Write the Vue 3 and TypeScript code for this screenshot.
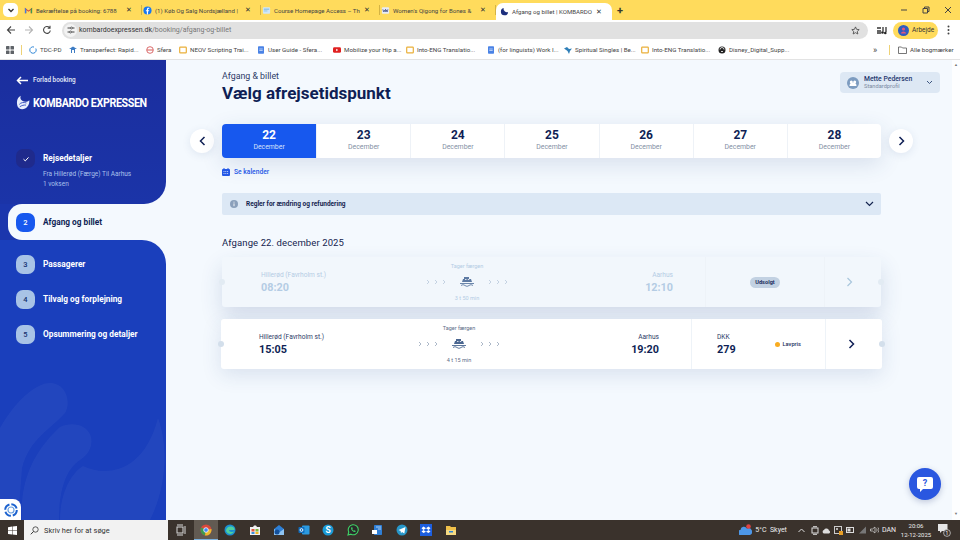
<script setup lang="ts">
const tabs = [
  { t: 'Bekræftelse på booking: 6788', w: 119, k: 'gm' },
  { t: '(1) Køb Og Salg Nordsjælland |', w: 119, k: 'fb' },
  { t: 'Course Homepage Access – Th', w: 119, k: 'co' },
  { t: "Women's Qigong for Bones &", w: 116, k: 'ww' },
]
const marks = [
  { t: 'TDC-PD', k: 'tdc', w: 40 },
  { t: 'Transperfect: Rapid...', k: 'tp', w: 77 },
  { t: 'Sfera', k: 'sf', w: 33 },
  { t: 'NEOV Scripting Trai...', k: 'y', w: 78 },
  { t: 'User Guide - Sfera...', k: 'b', w: 76 },
  { t: 'Mobilize your Hip a...', k: 'yt', w: 73 },
  { t: 'Into-ENG Translatio...', k: 'y', w: 81 },
  { t: '(for linguists) Work I...', k: 'b', w: 77 },
  { t: 'Spiritual Singles | Be...', k: 'sp', w: 77 },
  { t: 'Into-ENG Translatio...', k: 'y', w: 77 },
  { t: 'Disney_Digital_Supp...', k: 'di', w: 72 },
]
const steps = [
  { n: 3, t: 'Passagerer' },
  { n: 4, t: 'Tilvalg og forplejning' },
  { n: 5, t: 'Opsummering og detaljer' },
]
const days = [22, 23, 24, 25, 26, 27, 28]
</script>

<template>
  <div class="screen">
    <div class="tabbar">
      <div class="tabsearch"><svg width="8" height="8" viewBox="0 0 8 8"><path d="M1.5 3 4 5.5 6.5 3" fill="none" stroke="#333" stroke-width="1.3"/></svg></div>
      <div v-for="tab in tabs" :key="tab.k" class="tab" :style="{ width: tab.w + 'px' }">
        <svg v-if="tab.k === 'gm'" class="fav" viewBox="0 0 10 10"><path d="M1 8V2l4 3 4-3v6H7.500V4.500L5 6.400 2.500 4.500V8Z" fill="#d9483b"/><path d="M7.500 8V3.200L9 2v6Z" fill="#3d9a4f"/><path d="M1 8V2l1.500 1.200V8Z" fill="#3f7fe0"/></svg>
        <svg v-else-if="tab.k === 'fb'" class="fav" viewBox="0 0 10 10"><circle cx="5" cy="5" r="4.500" fill="#1877f2"/><path d="M5.600 9.400V5.900h1.100l.2-1.300H5.600v-.8c0-.4.2-.7.7-.7H7V2a6 6 0 0 0-1-.1c-1 0-1.700.6-1.700 1.700v1H3.200v1.300h1.100v3.500Z" fill="#fff"/></svg>
        <svg v-else-if="tab.k === 'co'" class="fav" viewBox="0 0 10 10"><rect x="1" y="1.500" width="8" height="7" rx="1" fill="#cfe6f7"/><rect x="2" y="3" width="6" height="1" fill="#6fb1de"/><rect x="2" y="5" width="4" height="1" fill="#8cc2e6"/></svg>
        <svg v-else class="fav" viewBox="0 0 10 10"><rect x="1" y="1.500" width="8" height="7" rx="1" fill="#e8ecf5"/><path d="m2 3.500.8 3 .8-2 .8 2 .8-3M5 3.500l.6 3 .7-2 .7 2 .7-3" fill="none" stroke="#24306e" stroke-width=".6"/></svg>
        <span class="tabtxt">{{ tab.t }}</span>
        <span class="tabx">✕</span>
      </div>
      <div class="tab active">
        <svg class="fav" viewBox="0 0 10 10"><path d="M1 5a4 4 0 0 1 3-4 4 4 0 0 0 1.500 4A3.500 3.500 0 0 0 9 5.500 4 4 0 0 1 1 5Z" fill="#1d2f7e"/></svg>
        <span class="tabtxt">Afgang og billet | KOMBARDO</span>
        <span class="tabx">✕</span>
      </div>
      <span class="plus">+</span>
      <div class="winctl">
        <svg width="8" height="8" viewBox="0 0 8 8"><path d="M1 4h6" stroke="#444" fill="none"/></svg>
        <svg width="8" height="8" viewBox="0 0 8 8"><path d="M1 2.500h4.500V7H1ZM2.500 2.500V1H7v4.500H5.500" stroke="#444" fill="none"/></svg>
        <svg width="8" height="8" viewBox="0 0 8 8"><path d="m1 1 6 6M7 1 1 7" stroke="#444" fill="none"/></svg>
      </div>
    </div>

    <div class="toolbar">
      <svg class="tool" viewBox="0 0 10 10"><path d="M9 5H1.500M5 1.500 1.500 5 5 8.500" fill="none" stroke="#444" stroke-width="1.100"/></svg>
      <svg class="tool" viewBox="0 0 10 10"><path d="M1 5h7.500M5 1.500 8.500 5 5 8.500" fill="none" stroke="#b5b5b5" stroke-width="1.100"/></svg>
      <svg class="tool" viewBox="0 0 10 10"><path d="M8.300 5.500A3.400 3.400 0 1 1 7.500 2.700M8 .8v2.400H5.700" fill="none" stroke="#444" stroke-width="1.100"/></svg>
      <div class="address">
        <span class="siteinfo"><svg width="8" height="8" viewBox="0 0 8 8"><path d="M.5 2h3M5.500 2h2M.5 6h2M4.500 6h3" stroke="#444"/><circle cx="4.500" cy="2" r="1" fill="none" stroke="#444" stroke-width=".8"/><circle cx="3.500" cy="6" r="1" fill="none" stroke="#444" stroke-width=".8"/></svg></span>
        <span class="url"><b>kombardoexpressen.dk</b>/booking/afgang-og-billet</span>
        <svg class="star" width="9" height="9" viewBox="0 0 10 10"><path d="m5 1 1.200 2.700 2.900.3L7 6l.6 2.900L5 7.400 2.400 8.900 3 6 .9 4l2.900-.3Z" fill="none" stroke="#444" stroke-width=".9"/></svg>
      </div>
      <svg class="ext" width="10" height="9" viewBox="0 0 10 9"><path d="M0 1h4v2H0ZM0 4h4v4H0Z" fill="#666"/><path d="M6 1v4.500M9 1v5" stroke="#222" stroke-width="1.200"/><circle cx="5.500" cy="6.500" r="1.300" fill="#222"/><circle cx="8.300" cy="7" r="1.300" fill="#222"/></svg>
      <div class="work">
        <svg width="11" height="11" viewBox="0 0 11 11"><circle cx="5.500" cy="5.500" r="5.500" fill="#2f5cc0"/><circle cx="5.500" cy="4" r="1.600" fill="#e0567a"/><path d="M2.700 8.500a3 3 0 0 1 5.600 0Z" fill="#e0567a"/></svg>
        <span>Arbejde</span>
      </div>
      <svg class="dots" width="3" height="10" viewBox="0 0 3 10"><circle cx="1.500" cy="1.500" r="1" fill="#444"/><circle cx="1.500" cy="5" r="1" fill="#444"/><circle cx="1.500" cy="8.500" r="1" fill="#444"/></svg>
    </div>

    <div class="bookmarks">
      <svg class="apps" width="8" height="8" viewBox="0 0 8 8"><g fill="#5f6368"><rect width="3.500" height="3.500" rx=".6"/><rect x="4.500" width="3.500" height="3.500" rx=".6"/><rect y="4.500" width="3.500" height="3.500" rx=".6"/><rect x="4.500" y="4.500" width="3.500" height="3.500" rx=".6"/></g></svg>
      <i class="bsep"></i>
      <div v-for="(m, i) in marks" :key="i" class="mark" :style="{ width: m.w + 'px' }">
        <svg class="mico" viewBox="0 0 8 8">
          <path v-if="m.k === 'tdc'" d="M6.800 2.500A3.200 3.200 0 1 1 5 1" fill="none" stroke="#2f86d6" stroke-width="1"/>
          <path v-else-if="m.k === 'tp'" d="M0 3 4 .5 8 3 6 3v4H5V4H3v3H2V3Z" fill="#3d7cc4"/>
          <g v-else-if="m.k === 'sf'"><circle cx="4" cy="4" r="3.300" fill="none" stroke="#d65a5a" stroke-width=".9"/><path d="M1 4h6" stroke="#d65a5a"/></g>
          <rect v-else-if="m.k === 'y'" x=".7" y="1.200" width="6.600" height="5.600" rx=".6" fill="none" stroke="#eab03a" stroke-width="1.200"/>
          <g v-else-if="m.k === 'b'"><rect x="1" y=".3" width="6" height="7.400" rx=".7" fill="#4a83e6"/><path d="M2.300 3h3.400M2.300 4.500h3.400" stroke="#fff" stroke-width=".6"/></g>
          <g v-else-if="m.k === 'yt'"><rect y="1.200" width="8" height="5.600" rx="1.400" fill="#e02020"/><path d="m3.200 2.700 2 1.300-2 1.300Z" fill="#fff"/></g>
          <path v-else-if="m.k === 'sp'" d="M0 2.500 3 1l2 2 3-.5L6 5 5 8 3.500 5Z" fill="#2f7fb8"/>
          <g v-else><circle cx="4" cy="4" r="3.500" fill="#222"/><path d="M2 3.500a2 2 0 0 1 4 0M3 5.500h2" stroke="#fff" stroke-width=".8" fill="none"/></g>
        </svg>
        <span>{{ m.t }}</span>
      </div>
      <span class="more">»</span>
      <i class="bsep sep2"></i>
      <div class="allmarks">
        <svg width="9" height="8" viewBox="0 0 9 8"><path d="M.5 1h3l1 1h4v5.500h-8Z" fill="none" stroke="#555" stroke-width=".8"/></svg>
        <span>Alle bogmærker</span>
      </div>
    </div>

    <div class="page">
      <aside class="side">
        <svg class="swirl" width="166" height="140" viewBox="0 0 166 140">
          <g fill="#ffffff" fill-opacity=".04">
            <path d="M0 48C15 22 35 3 50 3c15 0 22 18 15 30C50 50 30 58 22 88L18 140H0Z"/>
            <path d="M22 140C20 105 30 75 60 47c10-5 27-4 31 10 2 10-3 18-11 23-14 9-21 30-21 60Z"/>
            <path d="M60 140c0-25 10-46 23-54 20 10 60 10 75-48 11 30 8 70-8 102Z"/>
          </g>
        </svg>
        <div class="side-top">
          <div class="back">
            <svg width="13" height="9" viewBox="0 0 13 9"><path d="M12 4.500H2M5 1 1.500 4.500 5 8" fill="none" stroke="#fff" stroke-width="1.500"/></svg>
            <span>Forlad booking</span>
          </div>
          <div class="logo">
            <svg width="15" height="15" viewBox="0 0 15 15"><path d="M1 7C1 4 3 1.500 5 .5 4 3 5 5 7 6c2 1 5 1 7-1 .5 5-3 9.500-7.500 9.500S1 11 1 7Z" fill="#e8eefb"/><path d="M3.500 9.500C5 7.500 8 7 11 8M4 12c2-1.500 4.500-2 6.500-1.800" fill="none" stroke="#2440b8" stroke-width=".9"/></svg>
            <span class="logotext">KOMBARDO EXPRESSEN</span>
          </div>
          <div class="step1">
            <span class="num done"><svg width="8" height="8" viewBox="0 0 8 8"><path d="m1.500 4.200 1.800 1.700 3.200-3.500" fill="none" stroke="#fff" stroke-width="1"/></svg></span>
            <div>
              <div class="stepname">Rejsedetaljer</div>
              <div class="stepsub">Fra Hillerød (Færge) Til Aarhus</div>
              <div class="stepsub">1 voksen</div>
            </div>
          </div>
        </div>
        <div class="step-active">
          <span class="num cur">2</span>
          <span class="stepname dark">Afgang og billet</span>
        </div>
        <div class="side-bottom">
          <div v-for="s in steps" :key="s.n" class="step">
            <span class="num todo">{{ s.n }}</span>
            <span class="stepname">{{ s.t }}</span>
          </div>
        </div>
        <div class="widget">
          <svg width="16" height="16" viewBox="0 0 16 16"><circle cx="8" cy="8" r="5.800" fill="none" stroke="#1c62cf" stroke-width="2" stroke-dasharray="7 2"/><circle cx="8" cy="8" r="3" fill="none" stroke="#6aa0e0" stroke-width="1.200"/></svg>
        </div>
      </aside>

      <main class="main">
        <div class="content">
          <header class="head">
            <div>
              <div class="crumb">Afgang &amp; billet</div>
              <h1>Vælg afrejsetidspunkt</h1>
            </div>
            <div class="chip">
              <span class="avatar"><svg width="8" height="6" viewBox="0 0 8 6"><circle cx="2.300" cy="2" r="1.500" fill="#fff"/><circle cx="5.700" cy="2" r="1.500" fill="#fff"/><path d="M.5 6a2 2 0 0 1 7 0Z" fill="#fff"/></svg></span>
              <div class="chipname">
                <div>Mette Pedersen</div>
                <small>Standardprofil</small>
              </div>
              <svg width="7" height="5" viewBox="0 0 7 5"><path d="m1 1 2.500 2.500L6 1" fill="none" stroke="#3d5680" stroke-width="1"/></svg>
            </div>
          </header>

          <div class="daterow">
            <button class="round"><svg width="7" height="10" viewBox="0 0 7 10"><path d="M5.500 1 1.500 5l4 4" fill="none" stroke="#0f1f55" stroke-width="1.500"/></svg></button>
            <div class="days">
              <div v-for="(d, i) in days" :key="d" class="day" :class="{ on: i === 0 }">
                <strong>{{ d }}</strong>
                <span>December</span>
              </div>
            </div>
            <button class="round"><svg width="7" height="10" viewBox="0 0 7 10"><path d="m1.500 1 4 4-4 4" fill="none" stroke="#0f1f55" stroke-width="1.500"/></svg></button>
          </div>

          <div class="body">
            <div class="cal">
              <svg width="8" height="8" viewBox="0 0 8 8"><rect y="1" width="8" height="7" rx="1" fill="#2458e6"/><path d="M2 0v2M6 0v2" stroke="#2458e6"/><path d="M1.500 3.500h5M1.500 5.500h5" stroke="#fff" stroke-width=".7" stroke-dasharray="1 .8"/></svg>
              <span>Se kalender</span>
            </div>
            <div class="rules">
              <svg width="8" height="8" viewBox="0 0 8 8"><circle cx="4" cy="4" r="4" fill="#8ba0bb"/><path d="M4 3.400v2.800M4 1.700v.9" stroke="#fff" stroke-width=".9"/></svg>
              <span>Regler for ændring og refundering</span>
              <svg class="rch" width="9" height="6" viewBox="0 0 9 6"><path d="m1 1 3.500 3.500L8 1" fill="none" stroke="#152550" stroke-width="1.200"/></svg>
            </div>
            <h2>Afgange 22. december 2025</h2>

            <article class="card soldout">
              <div class="route">
                <div class="ep">
                  <span>Hillerød (Favrholm st.)</span>
                  <b>08:20</b>
                </div>
                <div class="mid">
                  <span>Tager færgen</span>
                  <div class="ferry">
                    <svg width="20" height="6" viewBox="0 0 20 6"><path d="m1 1 2 2-2 2M9 1l2 2-2 2M17 1l2 2-2 2" fill="none" stroke="#b7c8da" stroke-width=".8"/></svg>
                    <svg width="16" height="12" viewBox="0 0 16 12"><path d="M5 1h5v2h2l1 3H3l1-3h1Z" fill="#5d7aa3"/><path d="M6 3.500h1.500M8.800 3.500h1.500" stroke="#fff" stroke-width=".8"/><path d="M1 7.500h14M2 9.500c1.500-1 2.500-1 4 0s2.500 1 4 0 2.500-1 4 0" fill="none" stroke="#5d7aa3" stroke-width=".9"/></svg>
                    <svg width="20" height="6" viewBox="0 0 20 6"><path d="m1 1 2 2-2 2M9 1l2 2-2 2M17 1l2 2-2 2" fill="none" stroke="#b7c8da" stroke-width=".8"/></svg>
                  </div>
                  <span>3 t 50 min</span>
                </div>
                <div class="ep right">
                  <span>Aarhus</span>
                  <b>12:10</b>
                </div>
              </div>
              <div class="price center"><span class="sold">Udsolgt</span></div>
              <div class="go"><svg width="7" height="10" viewBox="0 0 7 10"><path d="m1.500 1 4 4-4 4" fill="none" stroke="#a9c6dc" stroke-width="1.200"/></svg></div>
              <i class="notch l"></i><i class="notch r"></i>
            </article>

            <article class="card open">
              <div class="route">
                <div class="ep">
                  <span>Hillerød (Favrholm st.)</span>
                  <b>15:05</b>
                </div>
                <div class="mid">
                  <span>Tager færgen</span>
                  <div class="ferry">
                    <svg width="20" height="6" viewBox="0 0 20 6"><path d="m1 1 2 2-2 2M9 1l2 2-2 2M17 1l2 2-2 2" fill="none" stroke="#97a6ba" stroke-width=".8"/></svg>
                    <svg width="16" height="12" viewBox="0 0 16 12"><path d="M5 1h5v2h2l1 3H3l1-3h1Z" fill="#4a6690"/><path d="M6 3.500h1.500M8.800 3.500h1.500" stroke="#fff" stroke-width=".8"/><path d="M1 7.500h14M2 9.500c1.500-1 2.500-1 4 0s2.500 1 4 0 2.500-1 4 0" fill="none" stroke="#4a6690" stroke-width=".9"/></svg>
                    <svg width="20" height="6" viewBox="0 0 20 6"><path d="m1 1 2 2-2 2M9 1l2 2-2 2M17 1l2 2-2 2" fill="none" stroke="#97a6ba" stroke-width=".8"/></svg>
                  </div>
                  <span>4 t 15 min</span>
                </div>
                <div class="ep right">
                  <span>Aarhus</span>
                  <b>19:20</b>
                </div>
              </div>
              <div class="price">
                <div class="ep">
                  <span>DKK</span>
                  <b>279</b>
                </div>
                <div class="low"><i></i>Lavpris</div>
              </div>
              <div class="go"><svg width="7" height="10" viewBox="0 0 7 10"><path d="m1.500 1 4 4-4 4" fill="none" stroke="#0f1f55" stroke-width="1.500"/></svg></div>
              <i class="notch l"></i><i class="notch r"></i>
            </article>
          </div>
        </div>
        <div class="scroll"><span>▲</span><span>▼</span></div>
        <button class="fab">
          <svg width="16" height="15" viewBox="0 0 16 15"><path d="M2 0h12a2 2 0 0 1 2 2v8a2 2 0 0 1-2 2H6l-3 3v-3H2a2 2 0 0 1-2-2V2a2 2 0 0 1 2-2Z" fill="#fff"/><text x="8" y="9" font-size="9" font-weight="700" text-anchor="middle" fill="#2a57e0" font-family="Roboto, sans-serif">?</text></svg>
        </button>
      </main>
    </div>

    <footer class="taskbar">
      <div class="start"><svg width="9" height="9" viewBox="0 0 9 9"><path d="M0 1.200 4 .6v3.600H0ZM4.500.5 9 0v4.200H4.500ZM0 4.800h4v3.700l-4-.6ZM4.500 4.800H9V9l-4.500-.6Z" fill="#fff"/></svg></div>
      <div class="search">
        <svg width="9" height="9" viewBox="0 0 9 9"><circle cx="5.500" cy="3.500" r="2.700" fill="none" stroke="#333" stroke-width=".8"/><path d="M3.500 5.500 .8 8.300" stroke="#333"/></svg>
        <span>Skriv her for at søge</span>
      </div>
      <div class="apps-row">
        <span class="ti"><svg viewBox="0 0 12 12"><rect x="2" y="3" width="6" height="6" fill="none" stroke="#d8d8d8"/><path d="M10 2v8M2 1h6M2 11h6" stroke="#d8d8d8"/></svg></span>
        <span class="ti cur-app"><svg viewBox="0 0 12 12"><circle cx="6" cy="6" r="5.500" fill="#d9483b"/><path d="M6 6 1.200 3.500A5.500 5.500 0 0 0 5 11.400Z" fill="#3d9a4f"/><path d="M6 6l5.400-1A5.500 5.500 0 0 1 5 11.400Z" fill="#e9bb2f"/><circle cx="6" cy="6" r="2.300" fill="#4285f4" stroke="#fff" stroke-width=".8"/></svg></span>
        <span class="ti"><svg viewBox="0 0 12 12"><circle cx="6" cy="6" r="5.500" fill="#1b8fd2"/><path d="M2 7c0-3 2-4.500 4.500-4.500S11 4 10.500 6H5c0 2 3 2.500 5 1.500-1 2.500-5 3.500-7 1Z" fill="#4fd0a0"/></svg></span>
        <span class="ti"><svg viewBox="0 0 12 12"><path d="M1 3h3l1-1.500h2L8 3h3v8H1Z" fill="#f1f1f1"/><rect x="2.500" y="5" width="3" height="2.500" fill="#e2553c"/><rect x="6.500" y="5" width="3" height="2.500" fill="#7fb83e"/><rect x="2.500" y="8" width="3" height="2" fill="#3a8fdc"/><rect x="6.500" y="8" width="3" height="2" fill="#f2b824"/></svg></span>
        <span class="ti"><svg viewBox="0 0 12 12"><path d="M6 1 11 5v6H1V5Z" fill="#2d7fd6"/><path d="M1 5l5 3.500L11 5v6H1Z" fill="#8ec3f2"/><circle cx="4" cy="8" r="2.500" fill="#13509c"/></svg></span>
        <span class="ti"><svg viewBox="0 0 12 12"><rect x="4" y="1.500" width="7.500" height="9" rx=".8" fill="#2b9ae0"/><rect x=".5" y="3" width="6" height="6" rx=".8" fill="#0f6cbd"/><circle cx="3.500" cy="6" r="1.400" fill="none" stroke="#fff" stroke-width=".9"/></svg></span>
        <span class="ti"><svg viewBox="0 0 12 12"><circle cx="6" cy="6" r="5.500" fill="#1a9bd7"/><text x="6" y="9" font-size="8.500" font-weight="700" text-anchor="middle" fill="#fff" font-family="Roboto, sans-serif">S</text></svg></span>
        <span class="ti"><svg viewBox="0 0 12 12"><path d="M1 11 1.800 8A5 5 0 1 1 4 10.200Z" fill="#2a2a2a" stroke="#3fd467" stroke-width="1.100"/><path d="M4 3.800c0 2.500 1.800 4.200 4.200 4.300l.6-1.200-1.400-.7-.6.600C6 6.400 5.500 5.800 5.200 5l.6-.6-.7-1.400Z" fill="#3fd467"/></svg></span>
        <span class="ti"><svg viewBox="0 0 12 12"><rect x="3" y="1" width="8" height="10" rx=".8" fill="#2f7fd6"/><rect x="1" y="6" width="5" height="4" fill="#fff"/><path d="M5 3h5M7 5h3" stroke="#cfe3f8" stroke-width=".8"/></svg></span>
        <span class="ti"><svg viewBox="0 0 12 12"><circle cx="6" cy="6" r="5.500" fill="#2797c9"/><path d="m2.500 6 7-3-1.200 6.500L6 8 5 9.200 4.600 7Z" fill="#fff"/></svg></span>
        <span class="ti"><svg viewBox="0 0 12 12"><rect width="12" height="12" fill="#1d5fe0"/><path d="M3.500 2.500 6 4.200 3.500 6 1.500 4.300ZM8.500 2.500 10.500 4.300 8.500 6 6 4.200ZM3.500 6 6 7.700 3.500 9 1.500 7.500ZM8.500 6 10.500 7.500 8.500 9 6 7.700Z" fill="#fff"/></svg></span>
        <span class="ti"><svg viewBox="0 0 12 12"><path d="M1 2h4l1 1h5v8H1Z" fill="#efc04a"/><rect x="1" y="6" width="10" height="5" fill="#f6da82"/><rect x="4" y="7" width="4" height="1.500" fill="#2f86d6"/></svg></span>
      </div>
      <div class="tray">
        <span class="weather">
          <svg width="13" height="12" viewBox="0 0 13 12"><path d="M1 11a2.500 2.500 0 0 1 .5-5A3.500 3.500 0 0 1 8 4.500 3.200 3.200 0 0 1 11 11Z" fill="#4d97e8"/><circle cx="9.500" cy="2.500" r="2.300" fill="#e04343"/></svg>
          <span>5°C&nbsp; Skyet</span>
        </span>
        <svg class="tr up" width="7" height="5" viewBox="0 0 7 5"><path d="m.5 4 3-3 3 3" fill="none" stroke="#ddd"/></svg>
        <svg class="tr" width="8" height="9" viewBox="0 0 8 9"><rect x="1" y="2" width="6" height="5" fill="none" stroke="#ddd"/><path d="M2 .7h4M2 8.300h4" stroke="#ddd"/></svg>
        <svg class="tr" width="9" height="7" viewBox="0 0 9 7"><path d="M2 6.500a1.800 1.800 0 0 1 0-3.500 2.700 2.700 0 0 1 5 .5 1.600 1.600 0 0 1 0 3Z" fill="#ddd"/></svg>
        <svg class="tr" width="9" height="9" viewBox="0 0 9 9"><rect x=".5" y=".5" width="7" height="7" fill="none" stroke="#ccc"/><circle cx="3" cy="3" r="1" fill="#ddd"/><rect x="5" y="5" width="4" height="4" fill="#e89f26"/></svg>
        <svg class="tr" width="9" height="6" viewBox="0 0 9 6"><rect x=".5" y=".5" width="7" height="5" fill="none" stroke="#ddd"/><rect x="1.500" y="1.500" width="3" height="3" fill="#ddd"/></svg>
        <svg class="tr" width="9" height="8" viewBox="0 0 9 8"><path d="M1 7.500 8 .5v7Z" fill="#777"/></svg>
        <svg class="tr" width="9" height="8" viewBox="0 0 9 8"><path d="M.5 3h2L5 1v6L2.500 5h-2ZM6.500 2.500a2.200 2.200 0 0 1 0 3M8 1.500a3.800 3.800 0 0 1 0 5" fill="none" stroke="#ddd" stroke-width=".7"/></svg>
        <span class="lang">DAN</span>
        <div class="clock"><div>20:06</div><div>12-12-2025</div></div>
        <svg class="note" width="13" height="13" viewBox="0 0 13 13"><path d="M0 0h9.500v7H4L2 9V7H0Z" fill="#e6e6e6"/><circle cx="9" cy="9" r="3.400" fill="#3a322c" stroke="#ddd" stroke-width=".7"/><text x="9" y="11" font-size="5" text-anchor="middle" fill="#fff" font-family="Roboto, sans-serif">1</text></svg>
      </div>
    </footer>
  </div>
</template>

<style>
html, body { margin: 0; background: #f4f9fe; }
</style>

<style scoped>
* { box-sizing: border-box; }
.screen { width: 960px; height: 540px; display: flex; flex-direction: column; overflow: hidden; font-family: Roboto, "Liberation Sans", sans-serif; color: #0f1f55; background: #f4f9fe; }

.tabbar { height: 20px; background: #ffdb5c; display: flex; align-items: center; padding-left: 3px; position: relative; color: #444; }
.tabsearch { width: 15px; height: 14px; background: #fff; border-radius: 5px; display: flex; align-items: center; justify-content: center; margin-right: 5px; }
.tab { height: 20px; display: flex; align-items: center; padding: 0 5px 0 1px; font-size: 6.100px; position: relative; flex: none; }
.tab:not(.active)::after { content: ""; position: absolute; right: 0; top: 5px; height: 10px; width: 1px; background: #d4b344; }
.fav { width: 9px; height: 9px; flex: none; margin-right: 3px; }
.tabtxt { flex: 1; white-space: nowrap; min-width: 0; }
.tabx { font-size: 6.500px; margin: 0 5px 0 3px; color: #333; flex: none; }
.tab.active { width: 116px; padding-left: 4px; background: #fff; border-radius: 7px 7px 0 0; height: 17px; align-self: flex-end; }
.plus { margin-left: 5px; font-size: 11px; font-weight: 700; color: #3a3a2a; line-height: 1; }
.winctl { margin-left: auto; display: flex; gap: 14px; padding-right: 8px; }

.toolbar { height: 20px; background: #fff; display: flex; align-items: center; padding-left: 6px; }
.tool { width: 10px; height: 10px; margin-right: 8px; flex: none; }
.address { width: 806px; height: 17px; margin-left: 2px; background: #e1e1e1; border-radius: 9px; display: flex; align-items: center; padding: 0 6px 0 2px; font-size: 7px; color: #777; }
.siteinfo { width: 13px; height: 13px; border-radius: 50%; background: #f3f3f3; display: flex; align-items: center; justify-content: center; margin-right: 2px; }
.url b { font-weight: 400; color: #333; }
.star { margin-left: auto; margin-right: 2px; }
.ext { margin-left: 9px; }
.work { width: 45px; height: 17px; margin-left: 6px; background: #ffdb5c; border-radius: 9px; display: flex; align-items: center; gap: 3px; padding-left: 5px; font-size: 6.500px; color: #333; }
.dots { margin-left: 9px; }

.bookmarks { height: 20px; background: #fff; display: flex; align-items: center; padding-left: 6px; font-size: 6.200px; color: #444; border-bottom: 1px solid #e3e3e3; }
.apps { flex: none; }
.bsep { width: 1px; height: 10px; background: #eed276; margin: 0 7px; flex: none; }
.mark { display: flex; align-items: center; gap: 3px; white-space: nowrap; flex: none; }
.mico { width: 8px; height: 8px; flex: none; }
.more { font-size: 9px; width: 9px; flex: none; margin-left: 83px; }
.sep2 { margin: 0 8px 0 7px; }
.allmarks { display: flex; align-items: center; gap: 3px; white-space: nowrap; }

.page { flex: 1; display: flex; min-height: 0; }
.side { width: 166px; flex: none; position: relative; display: flex; flex-direction: column; background: #f4f9fe; color: #fff; overflow: hidden; }
.swirl { position: absolute; left: 0; top: 320px; z-index: 1; }
.side-top { height: 144px; background: linear-gradient(#1b2e9e, #1b34a8); border-radius: 0 0 22px 0; padding: 15px 0 0 16px; position: relative; }
.side-bottom { flex: 1; background: #1a3fbc; border-radius: 0 24px 0 0; padding-top: 15px; padding-left: 16px; display: flex; flex-direction: column; gap: 16px; }
.side-bottom > * { position: relative; z-index: 2; }
.back { display: flex; align-items: center; gap: 4px; font-size: 6.400px; font-weight: 500; color: #e6ecfb; height: 10px; }
.logo { display: flex; align-items: center; gap: 3px; margin-top: 10px; font-size: 12.500px; font-weight: 700; letter-spacing: -.45px; height: 15px; white-space: nowrap; }
.logotext { transform: scaleX(.857); transform-origin: left center; }
.step1 { display: flex; gap: 8px; margin-top: 39px; }
.num { width: 19px; height: 19px; border-radius: 7px; display: flex; align-items: center; justify-content: center; font-size: 7.500px; font-weight: 500; flex: none; }
.done { background: #1f2a8c; }
.cur { background: #1758ee; color: #fff; }
.todo { background: #a8c3e6; color: #14306e; }
.stepname { font-size: 8.300px; font-weight: 700; color: #fff; line-height: 19px; white-space: nowrap; }
.stepname.dark { color: #0f1f55; }
.stepsub { font-size: 6.500px; color: #a9c0ec; line-height: 10px; white-space: nowrap; position: relative; top: 1px; }
.step-active { height: 36px; background: #1b36ad; display: flex; align-items: center; gap: 8px; padding-left: 16px; position: relative; isolation: isolate; }
.step-active::before { content: ""; position: absolute; z-index: -1; left: 8px; right: 0; top: 0; bottom: 0; background: #f4f9fe; border-radius: 14px 0 0 14px; }
.step { display: flex; align-items: center; gap: 8px; }
.widget { position: absolute; left: 0; bottom: 0; width: 21px; height: 21px; background: #fff; border-radius: 0 8px 0 0; display: flex; align-items: center; justify-content: center; z-index: 3; }

.main { flex: 1; display: flex; position: relative; min-width: 0; }
.content { flex: 1; padding: 10px 12px 0 24px; min-width: 0; }
.head { display: flex; justify-content: space-between; align-items: flex-start; padding-left: 32px; height: 54px; }
.crumb { font-size: 8.800px; color: #2c3a66; line-height: 12px; }
h1 { margin: 0; font-size: 17px; font-weight: 700; line-height: 22px; color: #0f1f55; }
.chip { width: 100px; height: 21px; margin-top: 2px; background: #dde8f4; border-radius: 4px; display: flex; align-items: center; padding: 0 7px; }
.avatar { width: 12px; height: 12px; border-radius: 50%; background: #7d9cc0; display: flex; align-items: center; justify-content: center; flex: none; }
.chipname { margin-left: 5px; flex: 1; font-size: 6.800px; font-weight: 500; line-height: 8px; color: #24366e; white-space: nowrap; }
.chipname small { display: block; font-size: 5.700px; line-height: 7px; color: #7b8aa2; font-weight: 400; }

.daterow { display: flex; align-items: center; gap: 8px; width: 723px; }
.round { width: 24px; height: 24px; border-radius: 50%; border: 0; background: #fff; display: flex; align-items: center; justify-content: center; padding: 0; box-shadow: 0 2px 8px rgba(40, 70, 130, .1); flex: none; }
.days { width: 659px; height: 34px; flex: none; display: grid; grid-template-columns: repeat(7, 1fr); background: #fff; border-radius: 4px; overflow: hidden; box-shadow: 0 6px 22px rgba(40, 70, 130, .14); }
.day { display: flex; flex-direction: column; align-items: center; padding-top: 4px; border-left: 1px solid #eef2f7; }
.day strong { font-size: 12px; line-height: 14px; font-weight: 700; color: #0f1f55; }
.day span { font-size: 6.900px; line-height: 9px; color: #8490a5; margin-top: 1px; }
.day.on { background: #1758ee; border-left: 0; }
.day.on strong { color: #fff; }
.day.on span { color: #d5e0fb; }

.body { padding-left: 32px; position: relative; }
.cal { display: flex; align-items: center; gap: 4px; margin-top: 9px; height: 10px; font-size: 6.700px; font-weight: 500; color: #2458e6; }
.rules { width: 659px; height: 22px; margin-top: 16px; background: #dce8f5; border-radius: 2px; display: flex; align-items: center; padding: 0 4px 0 8px; gap: 8px; font-size: 6.500px; font-weight: 700; color: #14244f; }
.rch { margin-left: auto; margin-right: 3px; }
h2 { margin: 21px 0 0; font-size: 9.500px; font-weight: 400; line-height: 13px; color: #14244f; letter-spacing: .1px; }

.card { height: 50px; display: grid; position: relative; border-radius: 3px; }
.soldout { width: 659px; margin-top: 8px; grid-template-columns: 484px 119px 1fr; background: #f2f7fc; box-shadow: 0 10px 22px rgba(40, 70, 130, .16); }
.open { width: 661px; margin: 12px 0 0 -1px; grid-template-columns: 471px 134px 1fr; background: #fff; box-shadow: 0 6px 20px rgba(40, 70, 130, .13); }
.route { display: grid; grid-template-columns: 1fr auto 1fr; align-items: center; padding: 0 32px 0 38px; border-right: 1px solid #eef3f8; }
.soldout .route { padding-left: 39px; }
.ep { display: flex; flex-direction: column; gap: 1px; padding-top: 1px; }
.ep span { font-size: 6.600px; line-height: 9px; white-space: nowrap; color: #2c3a66; }
.ep b { font-size: 10.800px; line-height: 14px; font-weight: 700; color: #0f1f55; }
.ep.right { align-items: flex-end; }
.mid { display: flex; flex-direction: column; align-items: center; font-size: 5.500px; color: #5e6d88; line-height: 8px; }
.ferry { display: flex; align-items: center; gap: 13px; height: 18px; margin: 3px 0; }
.soldout .ep span, .soldout .ep b, .soldout .mid { color: #b4cce4; }
.price { display: flex; align-items: center; justify-content: space-between; padding: 0 24px 0 25px; border-right: 1px solid #eef3f8; }
.price.center { justify-content: center; padding: 0; }
.sold { background: #c2d1e2; border-radius: 7px; padding: 1px 5px; font-size: 5.600px; line-height: 9px; font-weight: 700; color: #1e2f5e; }
.low { display: flex; align-items: center; gap: 2px; font-size: 5.700px; font-weight: 500; color: #1e2f5e; }
.low i { width: 5px; height: 5px; border-radius: 50%; background: #f9ac20; }
.go { display: flex; align-items: center; justify-content: center; padding-right: 6px; }
.soldout .go { padding-right: 8px; }
.notch { position: absolute; top: 22px; width: 6px; height: 6px; border-radius: 50%; background: #d3dfeb; }
.notch.l { left: -3px; }
.notch.r { right: -3px; }
.soldout .notch { background: #e2ebf3; }

.scroll { width: 8px; flex: none; background: #fdfeff; display: flex; flex-direction: column; justify-content: space-between; align-items: center; font-size: 4px; color: #777; line-height: 6px; padding: 2px 0 3px; }
.fab { position: absolute; right: 19px; bottom: 20px; width: 32px; height: 32px; border-radius: 50%; border: 0; padding: 0; background: #2a57e0; display: flex; align-items: center; justify-content: center; box-shadow: 0 2px 6px rgba(30, 50, 110, .25); }

.taskbar { height: 20px; background: #3a322c; display: flex; align-items: center; color: #eee; font-size: 7px; flex: none; }
.start { width: 24px; display: flex; justify-content: center; }
.search { width: 144px; height: 20px; background: #f2f2f2; color: #333; display: flex; align-items: center; gap: 5px; padding-left: 6px; font-size: 7.400px; }
.apps-row { display: flex; margin-left: 1px; }
.ti { width: 24.500px; height: 20px; display: flex; align-items: center; justify-content: center; }
.ti svg { width: 12px; height: 12px; }
.cur-app { background: #625a52; border-bottom: 1px solid #7cb1de; }
.tray { margin-left: auto; display: flex; align-items: center; }
.weather { display: flex; align-items: center; gap: 3px; margin-right: 11px; white-space: nowrap; }
.tr { margin-right: 3px; }
.tr.up { margin-right: 6px; }
.clock { width: 32px; margin-left: 4px; text-align: center; font-size: 6px; line-height: 9px; }
.note { margin: 0 9px 0 6px; }
</style>
